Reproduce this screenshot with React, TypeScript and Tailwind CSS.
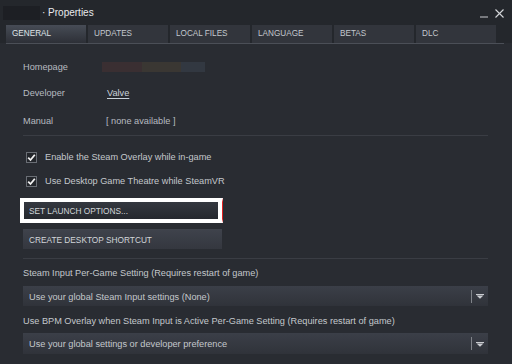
import React from "react";

const tabs = ["GENERAL", "UPDATES", "LOCAL FILES", "LANGUAGE", "BETAS", "DLC"];

function Check() {
  return (
    <div className="w-[11px] h-[11px] border border-[#6a6e75] bg-[#23262b] flex items-center justify-center">
      <svg width="9" height="9" viewBox="0 0 9 9">
        <path d="M1.2 4.6 L3.5 7 L7.8 1.8" fill="none" stroke="#f2f2f2" strokeWidth="1.8" />
      </svg>
    </div>
  );
}

function Arrow() {
  return (
    <svg width="8" height="5" viewBox="0 0 8 5">
      <rect x="0" y="0" width="8" height="1" fill="#c9ccd0" />
      <path d="M0.5 1.5 L7.5 1.5 L4 4.8 Z" fill="#c9ccd0" />
    </svg>
  );
}

function Dropdown({ text, h }: { text: string; h: string }) {
  return (
    <div className={`${h} w-[465px] flex items-center bg-gradient-to-b from-[#3b3f48] to-[#30333a]`}>
      <span className="pl-[6px] pt-px flex-1 text-[9.2px] text-[#c4c8cc]">{text}</span>
      <div className="w-px h-[13px] bg-[#80848a]" />
      <div className="w-[16px] flex items-center justify-center pt-px">
        <Arrow />
      </div>
    </div>
  );
}

export default function App() {
  return (
    <div
      className="w-[512px] h-[364px] overflow-hidden bg-[#292c32] flex flex-col"
      style={{ fontFamily: '"Liberation Sans", Arial, sans-serif' }}
    >
      <div className="bg-[#24272c] flex flex-col">
        <div className="h-[22px] flex items-center pt-[4px]">
          <div className="ml-[3px] w-[37px] h-[14px] bg-[#1d1f24]" />
          <span className="ml-[2px] text-[10px] text-[#e8eaec] leading-none">· Properties</span>
          <div className="ml-auto mr-[8px] flex items-center gap-[7px]">
            <svg width="8" height="9" viewBox="0 0 8 9">
              <rect x="0" y="7.5" width="8" height="1" fill="#c9ccd0" />
            </svg>
            <svg width="9" height="9" viewBox="0 0 9 9">
              <path d="M0.5 0.5 L8.5 8.5 M8.5 0.5 L0.5 8.5" stroke="#d4d6d9" strokeWidth="1.1" />
            </svg>
          </div>
        </div>
        <div className="mt-[3px] h-[18px] pl-[6px] flex gap-[2px]">
          {tabs.map((t, i) => (
            <div
              key={t}
              className={
                i === 0
                  ? "w-[80px] h-full flex items-center pl-[6px] pt-px bg-gradient-to-b from-[#474c56] to-[#2d3037] text-[8.2px] text-[#dfe3e8]"
                  : "w-[80px] h-full flex items-center pl-[6px] pt-px bg-[#32353c] text-[8.2px] text-[#c3c8ce]"
              }
            >
              {t}
            </div>
          ))}
        </div>
      </div>
      <div className="h-px ml-[6px] w-[498px] bg-[#4b4f57]" />

      <div className="flex flex-col pl-[23px] text-[9.2px] leading-[12px]">
        <div className="mt-[17px] h-[12px] flex items-center">
          <span className="w-[79px] text-[#b7bbc0]">Homepage</span>
          <div className="flex h-[10px]">
            <div className="w-[40px] bg-[#3a2f32]" />
            <div className="w-[39px] bg-[#3a3733]" />
            <div className="w-[24px] bg-[#323841]" />
          </div>
        </div>
        <div className="mt-[14px] h-[12px] flex items-center">
          <span className="w-[84px] text-[#b7bbc0]">Developer</span>
          <span className="text-[#c9d2da] underline underline-offset-[2px]">Valve</span>
        </div>
        <div className="mt-[16px] h-[12px] flex items-center">
          <span className="w-[83px] text-[#b7bbc0]">Manual</span>
          <span className="text-[#b7bbc0]">[ none available ]</span>
        </div>
        <div className="mt-[8px] h-px w-[465px] bg-[#3a3d44]" />

        <div className="mt-[15px] h-[12px] flex items-center pl-[3px] gap-[8px]">
          <Check />
          <span className="text-[#c4c8cc]">Enable the Steam Overlay while in-game</span>
        </div>
        <div className="mt-[12px] h-[12px] flex items-center pl-[3px] gap-[8px]">
          <Check />
          <span className="text-[#c4c8cc]">Use Desktop Game Theatre while SteamVR</span>
        </div>

        <div className="mt-[11px] -ml-[3px] w-[203px] h-[25px] border-4 border-white border-r-[1px] border-r-[#e02020] flex">
          <div className="flex-1 border-r-[4px] border-white h-full flex items-center pl-[5px] bg-gradient-to-b from-[#343840] to-[#25282e] text-[8.3px] text-[#d2d6da]">
            SET LAUNCH OPTIONS...
          </div>
        </div>

        <div className="mt-[6px] w-[199px] h-[20px] flex items-center pl-[6px] pt-px bg-gradient-to-b from-[#3f434c] to-[#34373f] text-[8.3px] text-[#d2d6da]">
          CREATE DESKTOP SHORTCUT
        </div>

        <div className="mt-[9px] h-px w-[465px] bg-[#3a3d44]" />

        <div className="mt-[8px] h-[12px] flex items-center text-[#c4c8cc]">
          Steam Input Per-Game Setting (Requires restart of game)
        </div>
        <div className="mt-[7px]">
          <Dropdown text="Use your global Steam Input settings (None)" h="h-[20px]" />
        </div>
        <div className="mt-[9px] h-[12px] flex items-center text-[#c4c8cc]">
          Use BPM Overlay when Steam Input is Active Per-Game Setting (Requires restart of game)
        </div>
        <div className="mt-[6px]">
          <Dropdown text="Use your global settings or developer preference" h="h-[21px]" />
        </div>
      </div>
    </div>
  );
}
